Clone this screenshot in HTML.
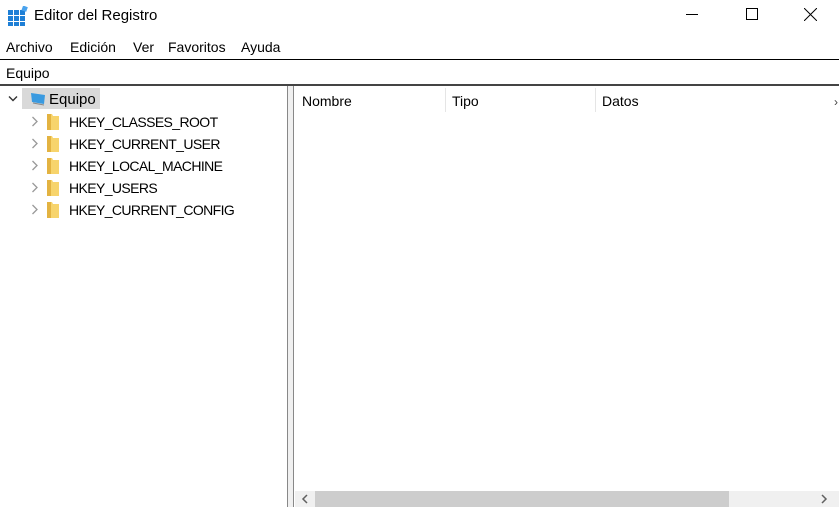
<!DOCTYPE html>
<html><head><meta charset="utf-8"><style>
*{margin:0;padding:0;box-sizing:border-box}
body{width:839px;height:507px;background:#fff;font-family:"Liberation Sans",sans-serif;font-size:14px;color:#000;position:relative;overflow:hidden}
.a{position:absolute;white-space:nowrap}
.k{font-size:14px;letter-spacing:-0.6px}
</style></head><body>
<svg class="a" style="left:8px;top:6px" width="20" height="20" viewBox="0 0 20 20">
<g fill="#1e7fd6"><rect x="0" y="4" width="5" height="5"/><rect x="6" y="4" width="5" height="5"/><rect x="12" y="4" width="5" height="5"/><rect x="0" y="10" width="5" height="5"/><rect x="6" y="10" width="5" height="5"/><rect x="12" y="10" width="5" height="5"/><rect x="0" y="16" width="5" height="4"/><rect x="6" y="16" width="5" height="4"/><rect x="12" y="16" width="5" height="4"/></g>
<rect x="14" y="0" width="5" height="5" fill="#4aa3ee" transform="rotate(20 16 3)"/></svg>
<div class="a" style="left:34px;top:7px;font-size:15px">Editor del Registro</div>
<div class="a" style="left:686px;top:14px;width:12px;height:1px;background:#000"></div>
<div class="a" style="left:746px;top:8px;width:12px;height:12px;border:1px solid #000"></div>
<svg class="a" style="left:804px;top:8px" width="13" height="13"><path d="M0 0L13 13M13 0L0 13" stroke="#000" stroke-width="1"/></svg>
<div class="a" style="left:6px;top:39px">Archivo</div>
<div class="a" style="left:70px;top:39px">Edición</div>
<div class="a" style="left:133px;top:39px">Ver</div>
<div class="a" style="left:168px;top:39px">Favoritos</div>
<div class="a" style="left:241px;top:39px">Ayuda</div>
<div class="a" style="left:0;top:59px;width:839px;height:1px;background:#000"></div>
<div class="a" style="left:6px;top:65px">Equipo</div>
<div class="a" style="left:0;top:84px;width:839px;height:2px;background:#444"></div>
<svg class="a" style="left:8px;top:95px" width="10" height="8"><path d="M1 1.5L5 5.5L9 1.5" stroke="#333" stroke-width="1.4" fill="none"/></svg>
<div class="a" style="left:22px;top:88px;width:78px;height:21px;background:#d9d9d9"></div>
<svg class="a" style="left:29px;top:91px" width="18" height="16"><path d="M2 2L16 4L15 13L3 11Z" fill="#3a9ae0"/><path d="M4 12L15 14" stroke="#888" stroke-width="1"/></svg>
<div class="a" style="left:49px;top:91px;font-size:15px">Equipo</div>
<div id="t"></div>
<script>
var k=["HKEY_CLASSES_ROOT","HKEY_CURRENT_USER","HKEY_LOCAL_MACHINE","HKEY_USERS","HKEY_CURRENT_CONFIG"],h="";
k.forEach(function(n,i){var y=113+i*22;
h+='<svg class="a" style="left:31px;top:'+(y+3)+'px" width="8" height="11"><path d="M1.5 1L6 5.5L1.5 10" stroke="#999" stroke-width="1.3" fill="none"/></svg>';
h+='<svg class="a" style="left:46px;top:'+(y)+'px" width="14" height="18"><path d="M1 1L6 1L7 3L13 3L13 17L1 17Z" fill="#f7d46c"/><path d="M1 1L5 1L5 17L1 17Z" fill="#e3b341"/></svg>';
h+='<div class="a k" style="left:69px;top:'+(y+1)+'px">'+n+'</div>';});
document.getElementById('t').innerHTML=h;
</script>
<div class="a" style="left:287px;top:86px;width:1px;height:421px;background:#888"></div>
<div class="a" style="left:288px;top:86px;width:5px;height:421px;background:#f0f0f0"></div>
<div class="a" style="left:293px;top:86px;width:1px;height:421px;background:#888"></div>
<div class="a" style="left:302px;top:93px">Nombre</div>
<div class="a" style="left:445px;top:88px;width:1px;height:24px;background:#e5e5e5"></div>
<div class="a" style="left:452px;top:93px">Tipo</div>
<div class="a" style="left:595px;top:88px;width:1px;height:24px;background:#e5e5e5"></div>
<div class="a" style="left:602px;top:93px">Datos</div>
<div class="a" style="left:834px;top:95px;font-size:12px;color:#444">›</div>
<div class="a" style="left:295px;top:491px;width:544px;height:16px;background:#f0f0f0"></div>
<div class="a" style="left:315px;top:491px;width:414px;height:16px;background:#cdcdcd"></div>
<svg class="a" style="left:301px;top:494px" width="8" height="10"><path d="M6 1L2 5L6 9" stroke="#606060" stroke-width="1.5" fill="none"/></svg>
<svg class="a" style="left:820px;top:494px" width="8" height="10"><path d="M2 1L6 5L2 9" stroke="#606060" stroke-width="1.5" fill="none"/></svg>
</body></html>
